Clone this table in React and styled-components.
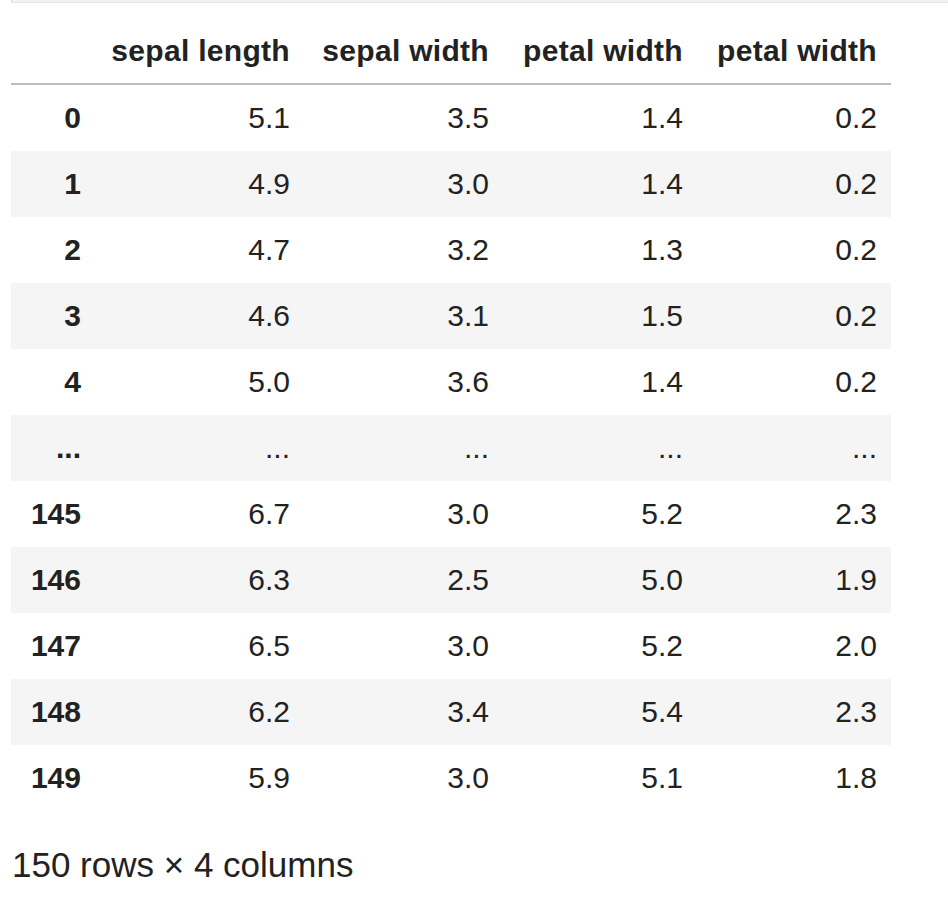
import styled, { createGlobalStyle } from "styled-components";

const GlobalStyle = createGlobalStyle`
  html, body {
    margin: 0;
    padding: 0;
    background: #fff;
  }
  body {
    font-family: "Liberation Sans", Arial, sans-serif;
    color: #222;
  }
`;

const Page = styled.div`
  width: 948px;
  min-height: 914px;
  box-sizing: border-box;
`;

const PrevCellEdge = styled.div`
  margin-left: 11px;
  height: 2px;
  background: #f2f2f2;
  border-left: 1px solid #dcdcdc;
  border-bottom: 1px solid #e2e2e2;
`;

const Output = styled.div`
  padding: 16px 0 0 11px;
`;

const Table = styled.table`
  border-collapse: collapse;
  table-layout: fixed;
  width: 880px;
  font-size: 30px;
  line-height: 1;
  color: #222;
`;

const HeadCell = styled.th`
  height: 65px;
  padding: 0 14px 0 0;
  text-align: right;
  font-weight: bold;
  letter-spacing: 0.3px;
  vertical-align: middle;
  white-space: nowrap;
  border-bottom: 2px solid #bdbdbd;
  width: ${(p) => p.$w}px;
  box-sizing: border-box;
`;

const Row = styled.tr`
  background: ${(p) => (p.$striped ? "#f5f5f5" : "#fff")};
`;

const IndexCell = styled.th`
  height: 66px;
  padding: 0 17px 0 0;
  text-align: right;
  font-weight: bold;
  vertical-align: middle;
`;

const ValueCell = styled.td`
  height: 66px;
  padding: 0 14px 0 0;
  text-align: right;
  vertical-align: middle;
`;

const Footer = styled.div`
  margin-top: 34px;
  padding-left: 12px;
  font-size: 35px;
  line-height: 40px;
  color: #222;
`;

const columns = [
  { label: "", w: 87 },
  { label: "sepal length", w: 206 },
  { label: "sepal width", w: 199 },
  { label: "petal width", w: 194 },
  { label: "petal width", w: 194 },
];

const rows = [
  ["0", "5.1", "3.5", "1.4", "0.2"],
  ["1", "4.9", "3.0", "1.4", "0.2"],
  ["2", "4.7", "3.2", "1.3", "0.2"],
  ["3", "4.6", "3.1", "1.5", "0.2"],
  ["4", "5.0", "3.6", "1.4", "0.2"],
  ["...", "...", "...", "...", "..."],
  ["145", "6.7", "3.0", "5.2", "2.3"],
  ["146", "6.3", "2.5", "5.0", "1.9"],
  ["147", "6.5", "3.0", "5.2", "2.0"],
  ["148", "6.2", "3.4", "5.4", "2.3"],
  ["149", "5.9", "3.0", "5.1", "1.8"],
];

export default function App() {
  return (
    <Page>
      <GlobalStyle />
      <PrevCellEdge />
      <Output>
        <Table>
          <thead>
            <tr>
              {columns.map((c, i) => (
                <HeadCell key={i} $w={c.w}>
                  {c.label}
                </HeadCell>
              ))}
            </tr>
          </thead>
          <tbody>
            {rows.map(([idx, ...vals], r) => (
              <Row key={r} $striped={r % 2 === 1}>
                <IndexCell>{idx}</IndexCell>
                {vals.map((v, j) => (
                  <ValueCell key={j}>{v}</ValueCell>
                ))}
              </Row>
            ))}
          </tbody>
        </Table>
      </Output>
      <Footer>150 rows × 4 columns</Footer>
    </Page>
  );
}
